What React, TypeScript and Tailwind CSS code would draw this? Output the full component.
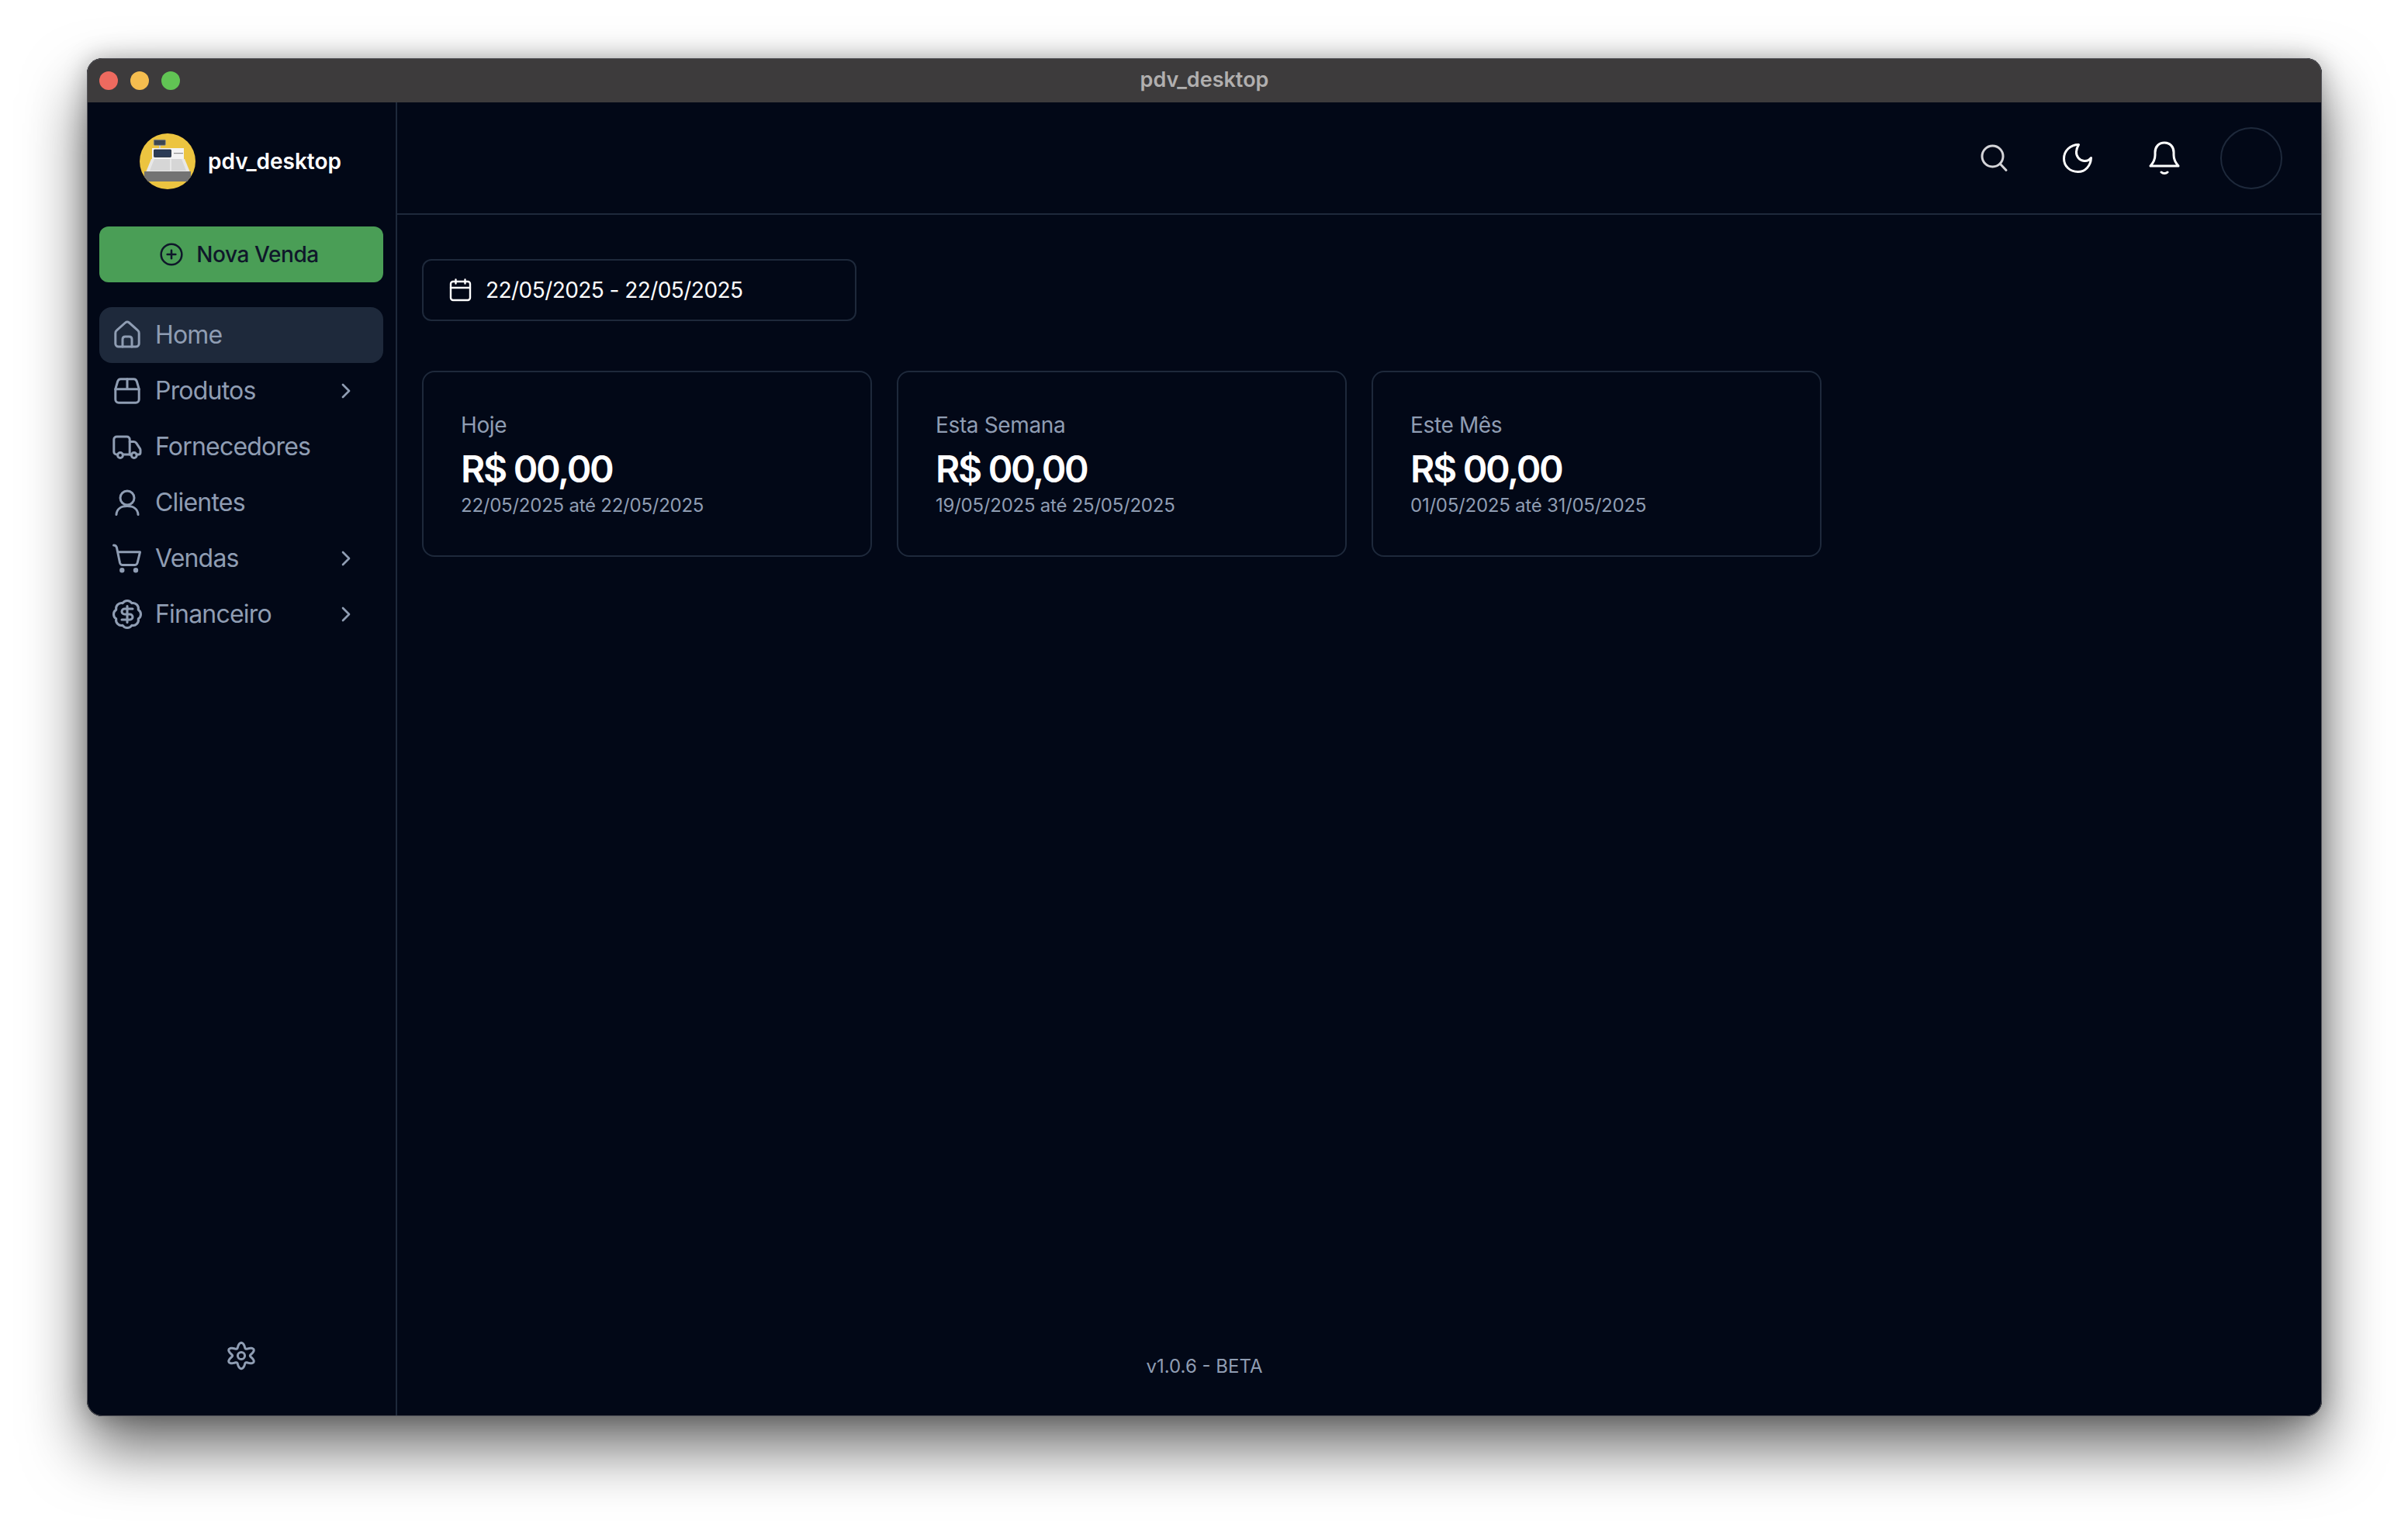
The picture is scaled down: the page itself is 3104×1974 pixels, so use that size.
import { BadgeDollarSign, ChevronRight, CirclePlus } from "lucide-react";
import type { ReactNode } from "react";

function Icon({ children, className = "size-10" }: { children: ReactNode; className?: string }) {
  return (
    <svg
      viewBox="0 0 40 40"
      fill="none"
      stroke="currentColor"
      strokeWidth="3"
      strokeLinecap="round"
      strokeLinejoin="round"
      className={`shrink-0 ${className}`}
    >
      {children}
    </svg>
  );
}

const HomeIcon = () => (
  <Icon>
    <path d="M4.8 17.5C4.8 16 5.4 14.7 6.5 13.8L17.6 4C19 2.8 21 2.8 22.4 4L33.5 13.8C34.6 14.7 35.2 16 35.2 17.5V31C35.2 33.4 33.4 35 31 35H9C6.6 35 4.8 33.4 4.8 31Z" />
    <path d="M14 35V25.5C14 23.4 15.4 22 17.5 22H22.5C24.6 22 26 23.4 26 25.5V35" />
  </Icon>
);

const PackageIcon = () => (
  <Icon>
    <path d="M4.8 17.7L7.6 8C8.2 6 9.7 4.8 11.7 4.8H28.3C30.3 4.8 31.8 6 32.4 8L35.2 17.7V31C35.2 33.5 33.5 35.2 31 35.2H9C6.5 35.2 4.8 33.5 4.8 31Z" />
    <path d="M4.8 17.7H35.2M20 4.8V17.7" />
  </Icon>
);

const TruckIcon = () => (
  <Icon>
    <path d="M7.5 30H6.5C4.4 30 2.8 28.5 2.8 26.5V10.5C2.8 8.5 4.4 7 6.5 7H19.5C21.6 7 23.2 8.5 23.2 10.5V30H14.5" />
    <path d="M23.2 13.5H28.5C30 13.5 31 14.2 31.8 15.4L36.4 22.3C36.8 23 37 23.6 37 24.3V27.5C37 29 36 30 34.5 30H32.2M25.3 30H23.2" />
    <circle cx="11" cy="31" r="3.4" />
    <circle cx="28.8" cy="31" r="3.4" />
  </Icon>
);

const UserIcon = () => (
  <Icon>
    <circle cx="20" cy="14" r="9" />
    <path d="M6 35.5C6.4 28.5 12 24.5 20 24.5C28 24.5 33.6 28.5 34 35.5" />
  </Icon>
);

const CartIcon = () => (
  <Icon>
    <path d="M2.5 3C4.7 3 6 4.2 6.5 6.2L10.5 25.5C11 27.6 12 28.5 14 28.5H29.5C31.5 28.5 32.7 27.6 33.2 25.5L36.5 11.8H7.8" />
    <circle cx="13.3" cy="35.2" r="1.7" fill="currentColor" />
    <circle cx="31" cy="35.2" r="1.7" fill="currentColor" />
  </Icon>
);

// wavy six-lobed outline of the settings cog
const cogPath =
  Array.from({ length: 120 }, (_, i) => {
    const a = (i / 120) * Math.PI * 2;
    const r = 13.5 + 3.2 * Math.cos(6 * a);
    const x = 20 + 1.1 * r * Math.sin(a);
    const y = 20 - r * Math.cos(a);
    return `${i === 0 ? "M" : "L"}${x.toFixed(2)} ${y.toFixed(2)}`;
  }).join("") + "Z";

const nav = [
  { label: "Home", icon: <HomeIcon />, active: true },
  { label: "Produtos", icon: <PackageIcon />, arrow: true },
  { label: "Fornecedores", icon: <TruckIcon /> },
  { label: "Clientes", icon: <UserIcon /> },
  { label: "Vendas", icon: <CartIcon />, arrow: true },
  { label: "Financeiro", icon: <BadgeDollarSign size={42} strokeWidth={1.75} className="shrink-0 -mx-px" />, arrow: true },
];

const cards = [
  { title: "Hoje", range: "22/05/2025 até 22/05/2025" },
  { title: "Esta Semana", range: "19/05/2025 até 25/05/2025" },
  { title: "Este Mês", range: "01/05/2025 até 31/05/2025" },
];

function Logo() {
  return (
    <svg viewBox="0 0 72 72" className="size-[72px] shrink-0">
      <defs>
        <clipPath id="logo-circle">
          <circle cx="36" cy="36" r="36" />
        </clipPath>
      </defs>
      <g clipPath="url(#logo-circle)">
        <rect width="72" height="72" fill="#ecc440" />
        <rect x="25" y="14" width="2" height="6" fill="#c9c9c9" />
        <rect x="18.3" y="8.3" width="15" height="7" rx="1" fill="#3c4652" stroke="#8d8d8d" strokeWidth="0.8" />
        <rect x="16" y="19" width="41" height="22" fill="#f3f3f3" />
        <rect x="18.5" y="21" width="22" height="9.5" rx="0.8" fill="#2b3b55" stroke="#1c2430" strokeWidth="0.8" />
        <rect x="44" y="25" width="12" height="1.2" fill="#8f8f8f" />
        <polygon points="15,33 58,33 65,50 8,50" fill="#e8e8e8" />
        <polygon points="19,33 39,33 39,48 13,48" fill="#d6d6d6" />
        <polygon points="41,33 54,33 60,48 41,48" fill="#d6d6d6" />
        <rect x="6" y="49" width="60" height="13" fill="#737373" />
      </g>
    </svg>
  );
}

export default function App() {
  return (
    <div className="h-screen overflow-hidden bg-white pt-[75px] pl-[112px] font-['Inter',sans-serif]">
      <div className="relative flex h-[1751px] w-[2881px] flex-col overflow-hidden rounded-[20px] bg-[#020817] shadow-[0_40px_80px_rgba(0,0,0,0.6),0_0_30px_rgba(0,0,0,0.25)]">
        <div className="grid h-[57px] shrink-0 grid-cols-[1fr_auto_1fr] items-center bg-[#3d3b3c] px-4">
          <div className="flex gap-4">
            <span className="size-6 rounded-full bg-[#ee6a5f]" />
            <span className="size-6 rounded-full bg-[#f5bd4f]" />
            <span className="size-6 rounded-full bg-[#61c454]" />
          </div>
          <span className="text-[27px] font-semibold text-[#b1afaf]">pdv_desktop</span>
        </div>

        <div className="flex min-h-0 flex-1">
          <aside className="flex w-[400px] shrink-0 flex-col border-r-2 border-[#1e293b] px-4 pt-10 pb-[58px]">
            <div className="flex h-[72px] items-center justify-center gap-4 pr-0.5">
              <Logo />
              <span className="text-[28px] font-semibold text-white">pdv_desktop</span>
            </div>
            <button className="mt-12 flex h-[72px] items-center justify-center gap-4 rounded-xl bg-[#4a9e56] pr-1.5 text-[28px] font-medium tracking-[-0.014em] text-[#0f172a]">
              <CirclePlus size={32} strokeWidth={1.9} />
              Nova Venda
            </button>
            <nav className="mt-8 flex flex-col">
              {nav.map((item) => (
                <a
                  key={item.label}
                  className={`flex h-[72px] items-center gap-4 rounded-2xl px-4 text-[32px] tracking-tight text-[#8f9db3] ${
                    item.active ? "bg-[#1e293b]" : ""
                  }`}
                >
                  {item.icon}
                  <span className="flex-1">{item.label}</span>
                  {item.arrow && <ChevronRight size={32} strokeWidth={2} className="mr-4" />}
                </a>
              ))}
            </nav>
            <div className="mt-auto flex justify-center text-[#8f9db3]">
              <Icon>
                <path d={cogPath} />
                <circle cx="20" cy="20" r="4.6" />
              </Icon>
            </div>
          </aside>

          <main className="min-w-0 flex-1">
            <header className="flex h-[145px] items-center border-b-2 border-[#1e293b] pr-[51px]">
              <div className="ml-auto text-[#d4d4d8]">
                <Icon>
                  <circle cx="18.5" cy="17.5" r="13.5" />
                  <path d="M28.5 27.5L36 35.5" />
                </Icon>
              </div>
              <div className="ml-[68px] text-white">
                <Icon>
                  <path d="M21.5 2.5C10.5 2.5 2.5 10.5 2.5 20.5C2.5 30.5 10.5 37.5 20.5 37.5C30 37.5 37 30 37.5 19.5C35 22.5 32 24 28.5 23.5C22 23 18 17 18.5 11.5C18.7 8 20 5 21.5 2.5Z" />
                </Icon>
              </div>
              <div className="ml-[72px] text-white">
                <svg viewBox="0 0 40 44" fill="none" stroke="currentColor" strokeWidth="3" strokeLinecap="round" strokeLinejoin="round" className="h-11 w-10">
                  <path d="M20 2C12.5 2 8 7.5 8 14.5V18C8 24 5.5 28 2 32H38C34.5 28 32 24 32 18V14.5C32 7.5 27.5 2 20 2Z" />
                  <path d="M16 40C18 42 22 42 24 40" />
                </svg>
              </div>
              <div className="ml-[52px] size-20 rounded-full border-2 border-[#1e293b]" />
            </header>

            <div className="pt-[57px] pr-[33px] pl-8">
              <button className="flex h-20 w-[560px] items-center gap-4 rounded-xl border-2 border-[#1e293b] px-8 text-[28px] tracking-[-0.02em] text-white">
                <svg viewBox="0 0 32 32" fill="none" stroke="currentColor" strokeWidth="2.4" strokeLinecap="round" strokeLinejoin="round" className="size-8 shrink-0">
                  <rect x="3" y="5" width="25" height="24" rx="3" />
                  <path d="M3 13H28M9.5 2.5V7.5M21.5 2.5V7.5" />
                </svg>
                22/05/2025 - 22/05/2025
              </button>

              <div className="mt-16 grid grid-cols-4 gap-8">
                {cards.map((card) => (
                  <div key={card.title} className="flex h-60 flex-col justify-center rounded-2xl border-2 border-[#1e293b] px-12">
                    <span className="text-[28px] leading-10 tracking-[-0.013em] text-[#8f9db3]">{card.title}</span>
                    <span className="mt-[9px] text-5xl leading-[56px] font-semibold tracking-[-0.048em] text-white">R$ 00,00</span>
                    <span className="mt-[3px] text-2xl leading-8 tracking-[-0.01em] text-[#8f9db3]">{card.range}</span>
                  </div>
                ))}
              </div>
            </div>
          </main>
        </div>

        <span className="absolute right-0 bottom-12 left-0 text-center text-2xl leading-8 text-[#8f9db3]">v1.0.6 - BETA</span>
        {/* window edge: black outline with a thin light line inside */}
        <div className="pointer-events-none absolute inset-0 rounded-[20px] border border-[#55555b] shadow-[0_0_0_1.5px_#111]" />
      </div>
    </div>
  );
}
